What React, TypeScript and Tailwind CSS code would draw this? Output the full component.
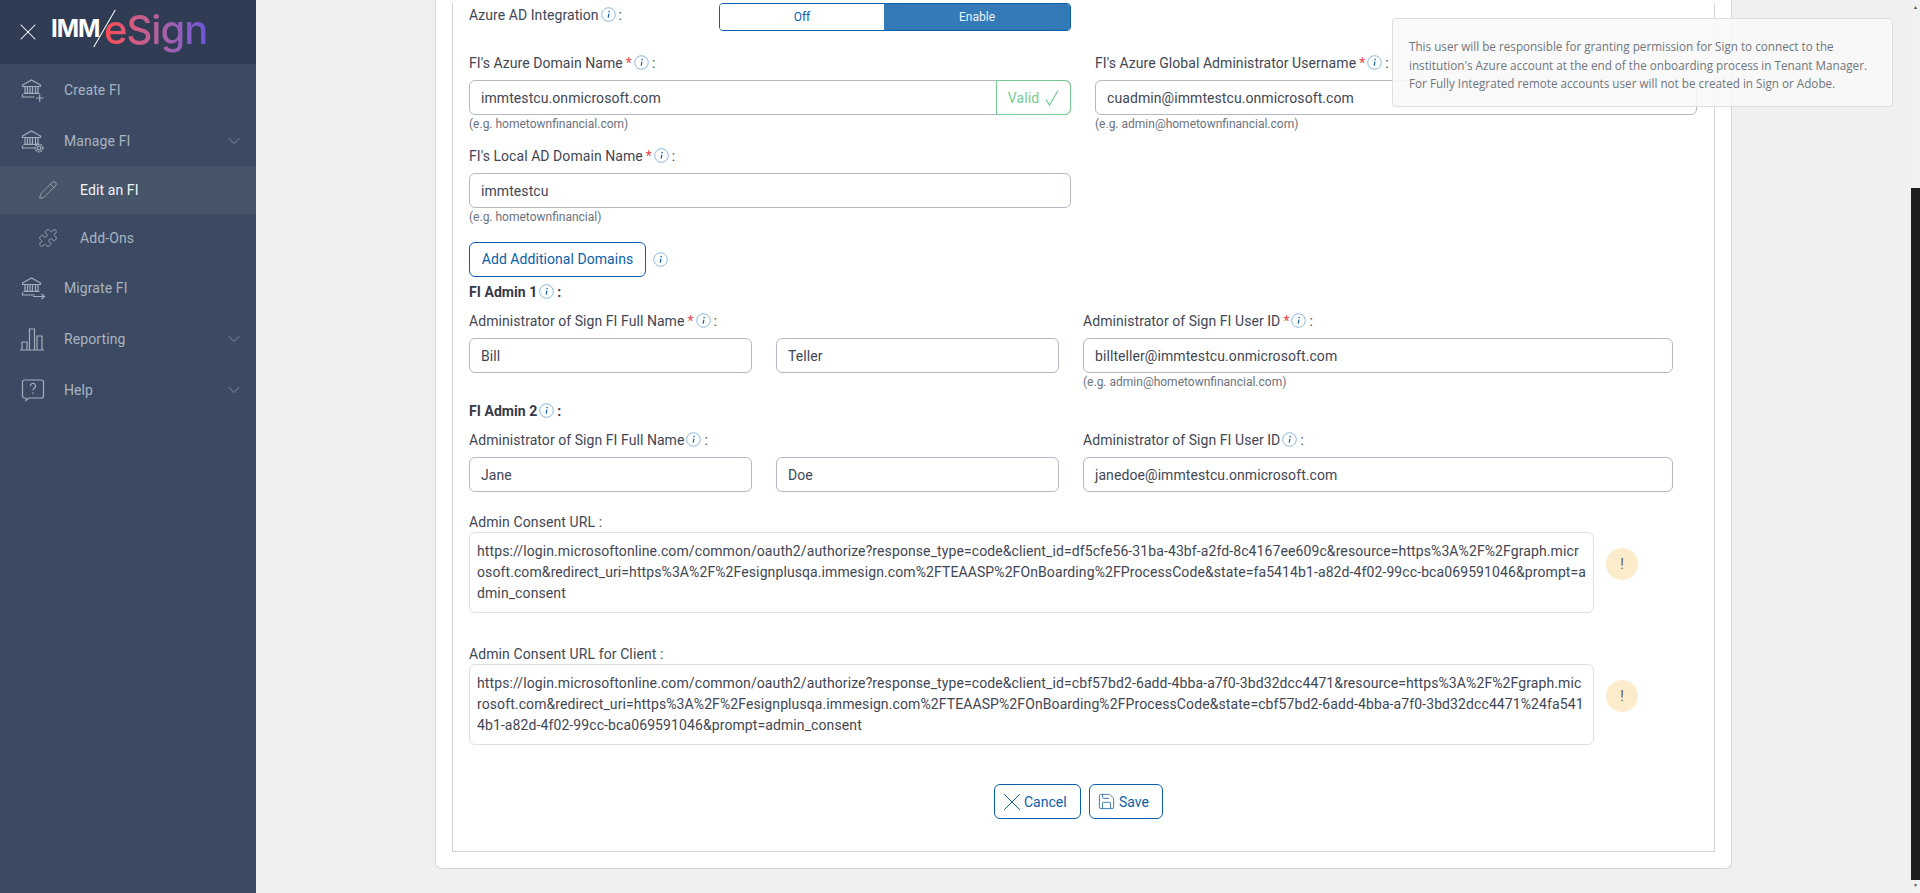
import { ChevronDown, Pencil, Puzzle, Save, X } from "lucide-react";
import type { ReactNode } from "react";

const URL_ONE =
  "https://login.microsoftonline.com/common/oauth2/authorize?response_type=code&client_id=df5cfe56-31ba-43bf-a2fd-8c4167ee609c&resource=https%3A%2F%2Fgraph.microsoft.com&redirect_uri=https%3A%2F%2Fesignplusqa.immesign.com%2FTEAASP%2FOnBoarding%2FProcessCode&state=fa5414b1-a82d-4f02-99cc-bca069591046&prompt=admin_consent";
// line break kept where the reference wraps this one
const URL_TWO =
  "https://login.microsoftonline.com/common/oauth2/authorize?response_type=code&client_id=cbf57bd2-6add-4bba-a7f0-3bd32dcc4471&resource=https%3A%2F%2Fgraph.mic\nrosoft.com&redirect_uri=https%3A%2F%2Fesignplusqa.immesign.com%2FTEAASP%2FOnBoarding%2FProcessCode&state=cbf57bd2-6add-4bba-a7f0-3bd32dcc4471%24fa5414b1-a82d-4f02-99cc-bca069591046&prompt=admin_consent";

function BankIcon({ extra }: { extra?: ReactNode }) {
  return (
    <svg width="24" height="24" viewBox="0 0 24 24" fill="none" stroke="currentColor" strokeWidth="1.2" className="overflow-visible">
      <path d="M1.5 7 10.5 2l9 5v1.5h-18z" />
      <path d="M4 9v6h2.5V9M9 9v6h2.5V9M14.5 9v6H17V9" />
      <path d="M2.5 15.5h16M1.5 16.5v2.5h12" />
      {extra}
    </svg>
  );
}

function SideRow({ icon, label, chevron }: { icon: ReactNode; label: string; chevron?: boolean }) {
  return (
    <div className="flex h-[51px] items-center pr-[12px] pl-[21px] text-[14px] tracking-[0.1px] text-[#a9b3c1]">
      <div className="w-[43px] text-[#a3adbb]">{icon}</div>
      <span className="flex-1 pt-px">{label}</span>
      {chevron && <ChevronDown size={20} strokeWidth={0.8} className="text-[#a3adbb]" />}
    </div>
  );
}

function Sidebar() {
  return (
    <aside className="h-[893px] w-[256px] shrink-0 bg-[#3b4a62]">
      <div className="flex h-[64px] items-center bg-[#2f3c54] pl-[14px]">
        <X size={28} strokeWidth={0.9} className="text-white" />
        <div className="relative ml-[9px] flex h-[64px] w-[160px] items-center">
          <span className="mb-[7px] w-[53px] text-[24px] leading-none font-bold tracking-[-1px] text-white font-[Inter,sans-serif]">
            IMM
          </span>
          <span className="absolute top-[7px] left-[53px] h-[43px] w-px rotate-[30deg] bg-white" />
          <span className="bg-linear-to-r from-[#ff4a4e] to-[#6b55d8] bg-clip-text pb-[4px] text-[40px] leading-[54px] font-medium tracking-[-1px] text-transparent font-[Inter,sans-serif]">
            eSign
          </span>
        </div>
      </div>
      <SideRow label="Create FI" icon={<BankIcon extra={<path d="M15 20h7.5M18.7 16.5v7.5" />} />} />
      <SideRow
        label="Manage FI"
        chevron
        icon={
          <BankIcon
            extra={
              <>
                <circle cx="18" cy="19" r="1.8" />
                <circle cx="18" cy="19" r="3.8" strokeDasharray="1.6 1.1" strokeWidth="1.6" />
              </>
            }
          />
        }
      />
      <div className="flex h-[48px] items-center bg-[#475569] pl-[38px] text-[14px] tracking-[0.1px] text-[#f1f4f8]">
        <Pencil size={20} strokeWidth={1} className="mr-[22px] text-[#a3adbb]" />
        <span className="pt-px">Edit an FI</span>
      </div>
      <div className="flex h-[48px] items-center pl-[38px] text-[14px] tracking-[0.1px] text-[#a9b3c1]">
        <Puzzle size={20} strokeWidth={1} className="mr-[22px] text-[#a3adbb]" />
        <span className="pt-px">Add-Ons</span>
      </div>
      <SideRow label="Migrate FI" icon={<BankIcon extra={<path d="M12 20.5h11.5M20.5 18l3 2.5-3 2.5" />} />} />
      <SideRow
        label="Reporting"
        chevron
        icon={
          <svg width="24" height="24" viewBox="0 0 24 24" fill="none" stroke="currentColor" strokeWidth="1.2" className="overflow-visible">
            <path d="M-1 23h24M1 23v-8h5v8M8.5 23V2h5v21M16 23V9h5v14" />
          </svg>
        }
      />
      <SideRow
        label="Help"
        chevron
        icon={
          <svg width="24" height="24" viewBox="0 0 24 24" fill="none" stroke="currentColor" strokeWidth="1.2">
            <path d="M3.5 2h17a2 2 0 0 1 2 2v14a2 2 0 0 1-2 2H8l-3 2.5V20H3.5a2 2 0 0 1-2-2V4a2 2 0 0 1 2-2z" />
            <path d="M9.5 8a2.5 2.5 0 1 1 3.6 2.2c-.8.5-1.1 1-1.1 2" />
            <path d="M12 14.5v1.2" strokeWidth="1.5" />
          </svg>
        }
      />
    </aside>
  );
}

function InfoIcon() {
  return (
    <svg width="15" height="15" viewBox="0 0 15 15" fill="none" className="shrink-0">
      <circle cx="7.5" cy="7.5" r="6.8" stroke="#7fb0da" strokeWidth="0.9" />
      <path d="M7.9 6.6 7.2 10.6" stroke="#0f5f9f" strokeWidth="1.2" />
      <circle cx="8.1" cy="4.6" r="0.8" fill="#0f5f9f" />
    </svg>
  );
}

function Label({ text, required, bold, className = "" }: { text: string; required?: boolean; bold?: boolean; className?: string }) {
  return (
    <div className={`flex h-[20px] items-center text-[14px] tracking-[0.06px] text-[#3f4654] ${bold ? "font-bold text-[#343a46]" : ""} ${className}`}>
      <span>{text}</span>
      {required && <span className="ml-[3px] text-[#e5484d]">*</span>}
      <span className="mb-[2px] ml-[2px]">
        <InfoIcon />
      </span>
      <span className="ml-[3px]">:</span>
    </div>
  );
}

function Field({ value, className = "" }: { value: string; className?: string }) {
  return (
    <div className={`flex h-[35px] items-center rounded-[6px] border border-[#b3b8c4] bg-white px-[11px] pt-px text-[14px] tracking-[0.08px] text-[#3f4654] ${className}`}>
      {value}
    </div>
  );
}

function Hint({ text }: { text: string }) {
  return <div className="mt-[1px] h-[16px] text-[12px] leading-[16px] text-[#6b7280]">{text}</div>;
}

function ConsentBox({ label, url }: { label: string; url: string }) {
  return (
    <>
      <div className="h-[20px] text-[14px] leading-[20px] tracking-[0.1px] text-[#3f4654]">{label}</div>
      <div className="flex items-start">
        <div className="h-[81px] w-[1125px] rounded-[6px] border border-[#dcdfe5] bg-white pt-[8px] pr-[6.7px] pl-[7px] text-[14px] leading-[21px] tracking-[0.1px] break-all whitespace-pre-line text-[#3f4654]">
          {url}
        </div>
        <div className="mt-[16px] ml-[12px] flex h-[32px] w-[32px] items-center justify-center rounded-full bg-[#fdeccc] text-[14px] text-[#5f5a4d]">
          !
        </div>
      </div>
    </>
  );
}

function NameRow({ first, last, id, hint }: { first: string; last: string; id: string; hint?: string }) {
  return (
    <div className="flex">
      <Field value={first} className="w-[283px]" />
      <Field value={last} className="ml-[24px] w-[283px]" />
      <div className="ml-[24px] w-[590px]">
        <Field value={id} />
        {hint && <Hint text={hint} />}
      </div>
    </div>
  );
}

function Form() {
  return (
    <div className="border-x border-b border-[#d4d4d4] pr-[17px] pb-[32px] pl-[16px]">
      <div className="flex h-[28px]">
        <div className="w-[250px] pt-[2px]">
          <Label text="Azure AD Integration" />
        </div>
        <div className="flex w-[352px] overflow-hidden rounded-[4px] border border-[#0b5ea8] text-[12px]">
          <div className="flex w-[164px] items-center justify-center bg-white text-[#0b5ea8]">Off</div>
          <div className="flex flex-1 items-center justify-center bg-[#337ab7] text-[#eef4fa]">Enable</div>
        </div>
      </div>

      <div className="mt-[22px] flex gap-[24px]">
        <div className="w-[602px]">
          <Label text="FI's Azure Domain Name" required />
          <div className="mt-[7px] flex h-[35px] rounded-[6px] border border-[#b3b8c4] text-[14px] tracking-[0.08px] text-[#3f4654]">
            <div className="flex flex-1 items-center px-[11px] pt-px">immtestcu.onmicrosoft.com</div>
            <div className="-my-px -mr-px flex w-[75px] items-center justify-center gap-[6px] rounded-r-[6px] border border-[#74cb94] pt-px text-[#74cb94]">
              Valid
              <svg width="14" height="18" viewBox="0 0 14 18" fill="none" stroke="#74cb94" strokeWidth="1.2">
                <path d="M1 10.5 4.5 16 13 1.5" />
              </svg>
            </div>
          </div>
          <Hint text="(e.g. hometownfinancial.com)" />
        </div>
        <div className="w-[602px]">
          <Label text="FI's Azure Global Administrator Username" required />
          <Field value="cuadmin@immtestcu.onmicrosoft.com" className="mt-[7px]" />
          <Hint text="(e.g. admin@hometownfinancial.com)" />
        </div>
      </div>

      <div className="mt-[14px] w-[602px]">
        <Label text="FI's Local AD Domain Name" required />
        <Field value="immtestcu" className="mt-[7px]" />
        <Hint text="(e.g. hometownfinancial)" />
      </div>

      <div className="mt-[17px] flex items-center">
        <div className="flex h-[35px] w-[177px] items-center justify-center rounded-[6px] border border-[#0b5ea8] text-[14px] tracking-[0.05px] text-[#0b5ea8]">
          Add Additional Domains
        </div>
        <span className="ml-[7px]">
          <InfoIcon />
        </span>
      </div>

      <Label text="FI Admin 1" bold className="mt-[5px]" />
      <div className="mt-[9px] flex">
        <Label text="Administrator of Sign FI Full Name" required className="w-[614px]" />
        <Label text="Administrator of Sign FI User ID" required />
      </div>
      <div className="mt-[7px]">
        <NameRow first="Bill" last="Teller" id="billteller@immtestcu.onmicrosoft.com" hint="(e.g. admin@hometownfinancial.com)" />
      </div>

      <Label text="FI Admin 2" bold className="mt-[11px]" />
      <div className="mt-[9px] flex">
        <Label text="Administrator of Sign FI Full Name" className="w-[614px]" />
        <Label text="Administrator of Sign FI User ID" />
      </div>
      <div className="mt-[7px]">
        <NameRow first="Jane" last="Doe" id="janedoe@immtestcu.onmicrosoft.com" />
      </div>

      <div className="mt-[20px]">
        <ConsentBox label="Admin Consent URL :" url={URL_ONE} />
      </div>
      <div className="mt-[31px]">
        <ConsentBox label="Admin Consent URL for Client :" url={URL_TWO} />
      </div>

      <div className="mt-[39px] flex justify-center gap-[8px] pr-[9px] text-[14px] text-[#0b5ea8]">
        <div className="flex h-[35px] w-[87px] items-center rounded-[6px] border border-[#0b5ea8] pl-[2px]">
          <X size={30} strokeWidth={0.8} className="shrink-0" />
          <span className="-ml-[3px] pt-px">Cancel</span>
        </div>
        <div className="flex h-[35px] w-[74px] items-center gap-[3px] rounded-[6px] border border-[#0b5ea8] pl-[7px]">
          <Save size={19} strokeWidth={1.2} className="shrink-0 text-[#3b78ad]" />
          <span className="pt-px">Save</span>
        </div>
      </div>
    </div>
  );
}

export default function App() {
  return (
    <div className="relative flex h-[893px] overflow-hidden bg-[#f0f0f0] font-[Roboto,sans-serif]">
      <Sidebar />
      <main className="flex-1 pl-[179px]">
        <div className="w-[1297px] rounded-b-[6px] border-x border-b border-[#d6d6d6] bg-white px-[16px] pb-[16px]">
          <div className="pt-[3px]">
            <Form />
          </div>
        </div>
      </main>
      <div className="flex w-[9px] shrink-0 flex-col bg-[#f1f1f1]">
        <div className="h-[188px] pt-[5px] text-center text-[5px] leading-none text-[#505050]">▲</div>
        <div className="h-[692px] bg-[#1e1e1e]" />
        <div className="pt-[3px] text-center text-[5px] leading-none text-[#505050]">▼</div>
      </div>
      <div className="absolute top-[18px] left-[1392px] h-[89px] w-[501px] rounded-[4px] border border-[#dedede] bg-[#f8f8f8]/90 px-[16px] pt-[18px] font-[Open_Sans,sans-serif] text-[11.7px] leading-[18.5px] text-[#70757d]">
        This user will be responsible for granting permission for Sign to connect to the institution's Azure account at the end of the onboarding process in Tenant Manager. For Fully Integrated remote accounts user will not be created in Sign or Adobe.
      </div>
    </div>
  );
}
